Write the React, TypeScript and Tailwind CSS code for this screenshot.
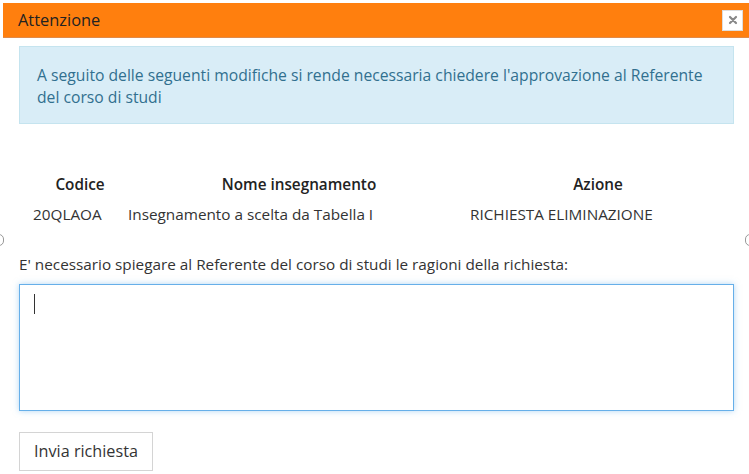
import React from 'react'

const font = { fontFamily: '"Open Sans", "Liberation Sans", sans-serif' }

export default function App() {
    return (
        <div className="relative w-[749px] h-[474px] overflow-hidden bg-white text-[#333]" style={font}>
            {/* dialog header */}
            <div className="mt-[3px] ml-[3px] h-[35px] bg-[#ff7f0e] border-b border-[#e08a4a] flex items-center justify-between pl-[15px] pr-[6px]">
                <span className="text-[16.4px] text-[#222]">Attenzione</span>
                <button className="w-[21px] h-[21px] bg-white border border-[#ddd] flex items-center justify-center">
                    <svg width="10" height="10" viewBox="0 0 10 10">
                        <path d="M2 2 L8 8 M8 2 L2 8" stroke="#888" strokeWidth="2.2" strokeLinecap="round" />
                    </svg>
                </button>
            </div>

            {/* info */}
            <div className="mt-[8px] mx-[19px] w-[715px] h-[78px] bg-[#d9edf7] border border-[#c5e4ef] pl-[17px] pr-[14px] pt-[17px] text-[15.7px] leading-[22px] text-[#31708f]">
                A seguito delle seguenti modifiche si rende necessaria chiedere l'approvazione al Referente del corso di studi
            </div>

            {/* table */}
            <div className="mt-[49px] text-[15.3px]">
                <div className="flex font-semibold text-[#222] h-[22px] items-center">
                    <div className="ml-[19px] w-[122px] text-center">Codice</div>
                    <div className="w-[316px] text-center">Nome insegnamento</div>
                    <div className="w-[282px] text-center">Azione</div>
                </div>
                <div className="flex mt-[8px] h-[22px] items-center">
                    <div className="ml-[33px] w-[95px]">20QLAOA</div>
                    <div className="w-[342px]">Insegnamento a scelta da Tabella I</div>
                    <div>RICHIESTA ELIMINAZIONE</div>
                </div>
            </div>

            <div className="mt-[28px] ml-[19px] text-[15.3px] h-[22px] leading-[22px]">
                E' necessario spiegare al Referente del corso di studi le ragioni della richiesta:
            </div>

            <div className="mt-[9px] mx-[19px] w-[715px] h-[127px] border border-[#66afe9] shadow-[0_0_6px_rgba(102,175,233,0.5)] bg-white pl-[14px] pt-[9px]">
                <div className="w-px h-[20px] bg-[#333]" />
            </div>

            <button className="mt-[21px] ml-[19px] w-[134px] h-[39px] border border-[#d4d4d4] bg-white text-[16.2px] text-[#333]">
                Invia richiesta
            </button>

            {/* side handles */}
            <div className="absolute left-[-6px] top-[234px] w-[10px] h-[12px] rounded-full border border-[#999]" />
            <div className="absolute right-[-6px] top-[234px] w-[10px] h-[12px] rounded-full border border-[#999]" />
        </div>
    )
}
